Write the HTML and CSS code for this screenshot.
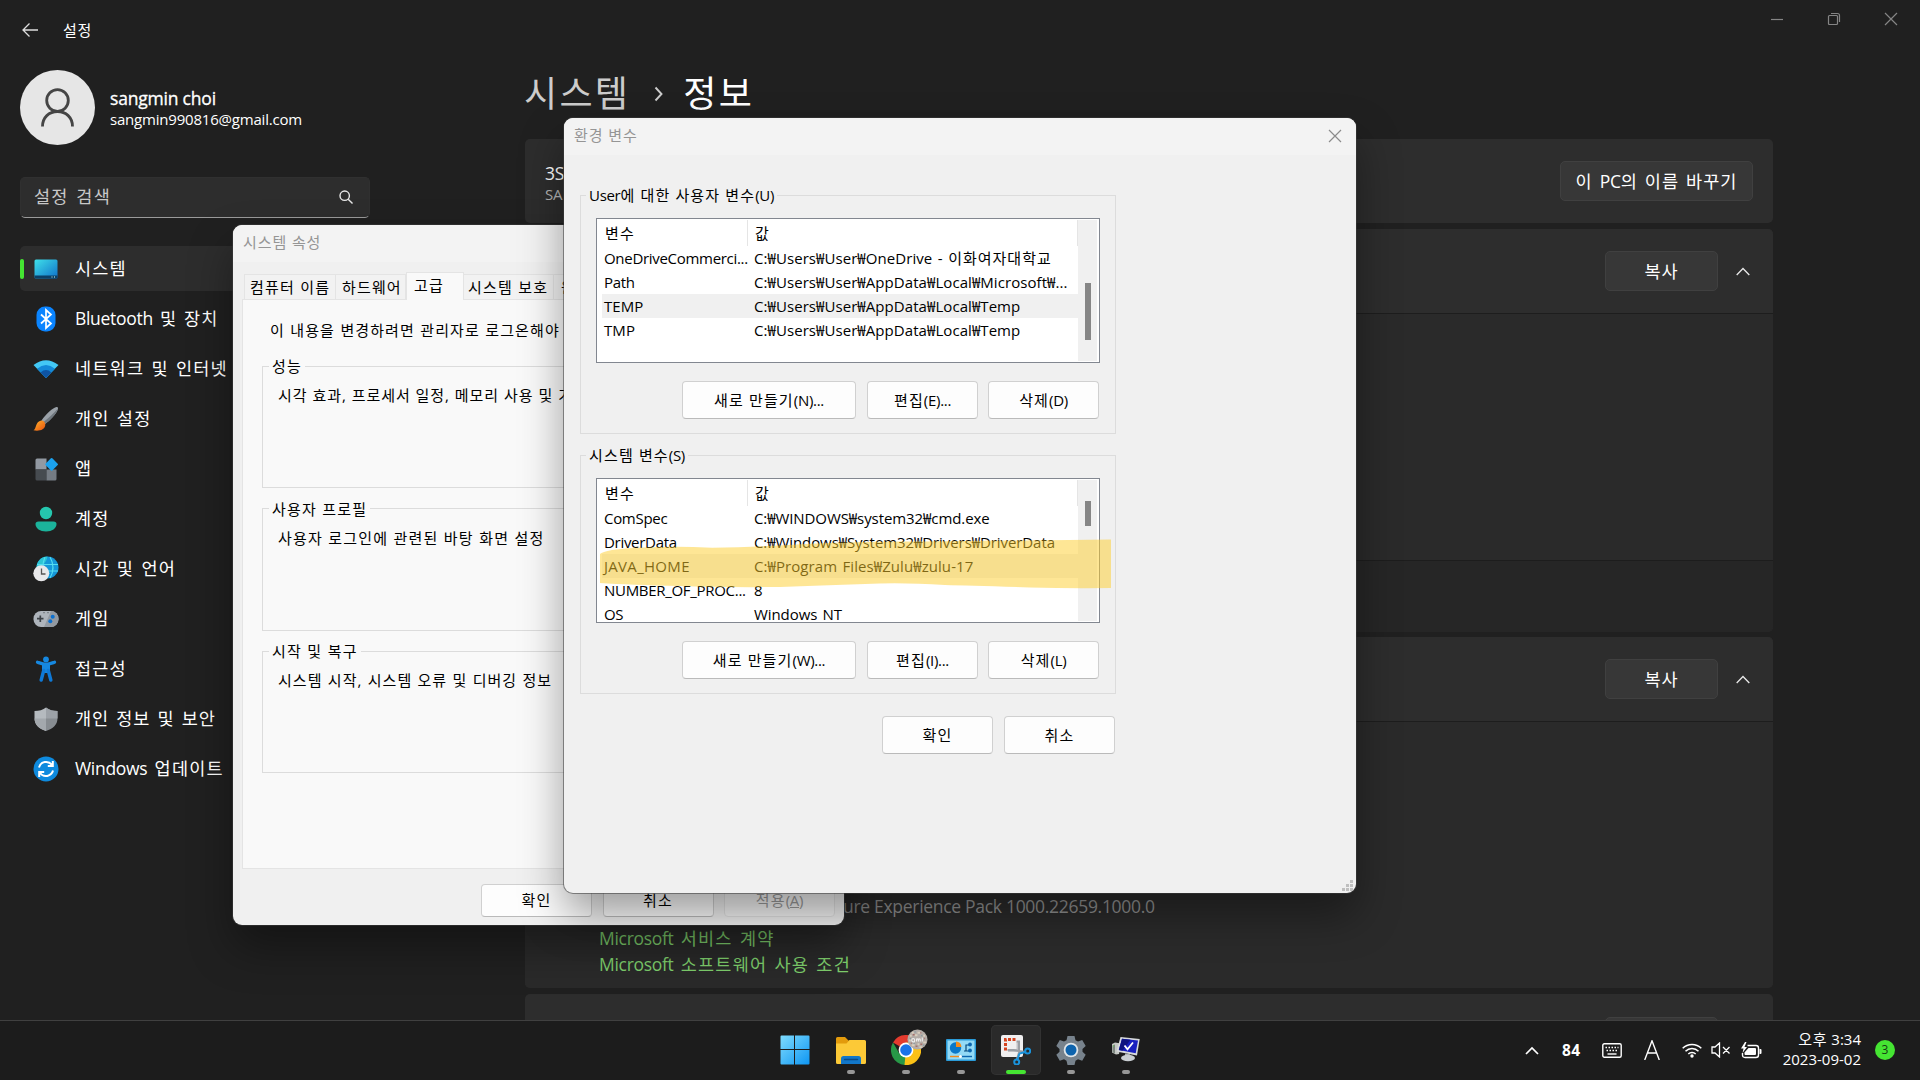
FILE: index.html
```html
<!DOCTYPE html>
<html lang="ko">
<head>
<meta charset="utf-8">
<title>설정</title>
<link rel="stylesheet" href="styles.css">
</head>
<body>
<div class="desktop">

<div class="settings">
  <header class="topbar">
    <div class="topbar-left">
      <svg class="back" width="16" height="16" viewBox="0 0 16 16"><path d="M7.5 1.5 1 8l6.500 6.500M1 8h15" fill="none" stroke="#ddd" stroke-width="1.3"/></svg>
      <span class="app-name">설정</span>
    </div>
    <div class="window-controls">
      <svg width="14" height="14" viewBox="0 0 14 14"><path d="M1 7.500h12" stroke="#858585" stroke-width="1.200"/></svg>
      <svg width="14" height="14" viewBox="0 0 14 14"><path d="M1.500 4.500q0-1 1-1h7q1 0 1 1v7q0 1-1 1h-7q-1 0-1-1zM4 1.500h6.500q2 0 2 2V10" fill="none" stroke="#858585" stroke-width="1.200"/></svg>
      <svg width="14" height="14" viewBox="0 0 14 14"><path d="M1 1l12 12M13 1 1 13" stroke="#858585" stroke-width="1.200"/></svg>
    </div>
  </header>

  <div class="settings-body">
    <aside class="sidebar">
      <div class="account">
        <svg width="75" height="75" viewBox="0 0 75 75"><circle cx="37.500" cy="37.500" r="37.500" fill="#e6e6e6"/><g fill="none" stroke="#454545" stroke-width="2.800"><circle cx="37.500" cy="30.500" r="10.800"/><path d="M22.500 56.500c0-9 6.500-15 15-15s15 6 15 15"/></g></svg>
        <div class="account-text">
          <div class="account-name">sangmin choi</div>
          <div class="account-mail">sangmin990816@gmail.com</div>
        </div>
      </div>
      <div class="search">
        <span>설정 검색</span>
        <svg width="14" height="14" viewBox="0 0 14 14"><g fill="none" stroke="#e8e8e8" stroke-width="1.400"><circle cx="5.700" cy="5.700" r="4.700"/><path d="M9.200 9.200 13.500 13.500"/></g></svg>
      </div>
      <nav class="nav">
        <a class="nav-item current">
          <svg viewBox="0 0 26 26"><defs><linearGradient id="gm" x1="0" y1="0" x2="1" y2="1"><stop offset="0" stop-color="#3fe0ea"/><stop offset="1" stop-color="#0f70c8"/></linearGradient></defs><rect x="1.500" y="3.500" width="23" height="19" rx="1.500" fill="url(#gm)"/><path d="M1.500 19.500h23v1.500q0 1.500-1.500 1.500H3q-1.500 0-1.500-1.500z" fill="#0b3f66"/><path d="M18.500 21h1m1.500 0h1" stroke="#cfe" stroke-width="1"/></svg>
          <span class="nav-label">시스템</span></a>
        <a class="nav-item">
          <svg viewBox="0 0 26 26"><rect x="3.500" y=".5" width="19" height="25" rx="8.500" fill="#0a84ff"/><path d="M8 8.500l10 9-5 4.500V4l5 4.500-10 9" fill="none" stroke="#fff" stroke-width="1.700"/></svg>
          <span class="nav-label tight"><span class="la">Bluetooth</span> 및 장치</span></a>
        <a class="nav-item">
          <svg viewBox="0 0 26 26"><path d="M.5 9Q13-.5 25.500 9L13 22z" fill="#43c8f5"/><path d="M4 12.700Q13 5.500 22 12.700L13 22z" fill="#1489d8"/><path d="M7.600 16.400Q13 11.500 18.400 16.400L13 22z" fill="#0e54a4"/></svg>
          <span class="nav-label">네트워크 및 인터넷</span></a>
        <a class="nav-item">
          <svg viewBox="0 0 26 26"><defs><linearGradient id="gb" x1="0" y1="0" x2="1" y2="1"><stop offset="0" stop-color="#ffb52e"/><stop offset="1" stop-color="#e8500c"/></linearGradient></defs><path d="M8.500 14.500C13 8 20 1.500 23.500 1q2-.3 1.500 2C23.500 8 17 14.500 12 18z" fill="#9aa1a8"/><path d="M10 16.500C15 12.500 21 7 25 2.500 23.500 8 17 14.500 12 18z" fill="#6f777e"/><path d="M8.300 14.500c2.500 0 4.200 1.800 4 4.500-.3 5-6.500 6.500-11.800 5.300 3.200-1.600 1.500-8.500 7.800-9.800z" fill="url(#gb)"/></svg>
          <span class="nav-label">개인 설정</span></a>
        <a class="nav-item">
          <svg viewBox="0 0 26 26"><path d="M2.500 4q0-1.500 1.500-1.500h9.500v11h-11z" fill="#9299a2"/><path d="M2.500 13.500h11v11H4q-1.500 0-1.500-1.500z" fill="#464b50"/><path d="M13.500 13.500h10V23q0 1.500-1.500 1.500h-8.500z" fill="#757c84"/><rect x="13.800" y="3.600" width="9.600" height="9.600" rx="1" transform="rotate(45 18.600 8.400)" fill="#1ba2ee"/></svg>
          <span class="nav-label">앱</span></a>
        <a class="nav-item">
          <svg viewBox="0 0 26 26"><circle cx="13" cy="7" r="6.200" fill="#25c7ae"/><path d="M5.500 15.500h15q3 0 3 2.500c0 4.500-4.500 7.500-10.500 7.500S2.500 22.500 2.500 18q0-2.500 3-2.500z" fill="#1bb39b"/></svg>
          <span class="nav-label">계정</span></a>
        <a class="nav-item">
          <svg viewBox="0 0 26 26"><circle cx="14.500" cy="11.500" r="11" fill="#1597d8"/><path d="M14.500.5a11 11 0 0 0-11 11c6-1 10-5 11-11z" fill="#2cc5d4"/><path d="M12 1c-3 7-3 14 1 21M17 1c4 7 4 14 0 21M4 8.500h21M4.500 15h20.500" fill="none" stroke="#55ddf0" stroke-width="1.100"/><circle cx="8.300" cy="17.300" r="8" fill="#e8e8ea"/><path d="M8.500 12.500v5.500h4" fill="none" stroke="#555" stroke-width="1.300"/></svg>
          <span class="nav-label">시간 및 언어</span></a>
        <a class="nav-item">
          <svg viewBox="0 0 26 26"><rect x=".5" y="5" width="25" height="16" rx="7.500" fill="#aeb4bb"/><path d="M18 5a7.500 8 0 0 1 0 16h-7z" fill="#9299a1"/><path d="M7.300 9.500v6.500M4 12.700h6.500" stroke="#3d4247" stroke-width="1.700"/><circle cx="19.700" cy="10.700" r="2" fill="#0b70d0"/><circle cx="17.300" cy="15.300" r="2" fill="#0b70d0"/><path d="M10.500 6.700h1m3 0h1" stroke="#3d4247"/></svg>
          <span class="nav-label">게임</span></a>
        <a class="nav-item">
          <svg viewBox="0 0 26 26"><circle cx="13" cy="3.500" r="2.900" fill="#1688e0"/><path d="M4.500 6.300c3 1 5.500 2 8.500 2s5.500-1 8.500-2" fill="none" stroke="#1688e0" stroke-width="3.300" stroke-linecap="round"/><path d="M9 8h8v7l-1 2H10l-1-2z" fill="#1688e0"/><path d="M10.700 14.500 8.200 24M15.300 14.500 17.800 24" stroke="#0f79d6" stroke-width="3.400" stroke-linecap="round"/></svg>
          <span class="nav-label">접근성</span></a>
        <a class="nav-item">
          <svg viewBox="0 0 26 26"><path d="M13 1.500c3 2.500 7 3.500 11.500 3.500v7c0 7-4.500 10.500-11.500 13z" fill="#878c91"/><path d="M13 1.500C10 4 6 5 1.500 5v7c0 7 4.500 10.500 11.500 13z" fill="#b5babf"/><path d="M1.500 12.500H13V25C6 22.500 1.800 19 1.500 12.500z" fill="#a3a8ad"/><path d="M13 1.500c3 2.500 7 3.500 11.500 3.500v7.500H13z" fill="#9da2a8"/></svg>
          <span class="nav-label tight">개인 정보 및 보안</span></a>
        <a class="nav-item">
          <svg viewBox="0 0 26 26"><circle cx="13" cy="13" r="12.500" fill="#0e8ade"/><g fill="none" stroke="#fff" stroke-width="2"><path d="M6 11.500a7.300 7.300 0 0 1 13-2.500"/><path d="M20 14.500a7.300 7.300 0 0 1-13 2.500"/><path d="M19.800 5v5h-5M6.200 21v-5h5"/></g></svg>
          <span class="nav-label"><span class="la">Windows</span> 업데이트</span></a>
      </nav>
    </aside>

    <main class="content">
      <h1 class="crumbs"><span class="crumb-parent">시스템</span><svg width="10" height="16" viewBox="0 0 10 16"><path d="M1.500 1.500 7.500 8l-6 6.500" fill="none" stroke="#ccc" stroke-width="1.900"/></svg><span>정보</span></h1>
      <section class="card">
        <div class="card-head">
          <div class="pc"><div class="pc-name">3S</div><div class="pc-model">SA</div></div>
          <button class="dark-btn rename">이 <span class="la">PC</span>의 이름 바꾸기</button>
        </div>
      </section>
      <section class="card specs">
        <div class="card-head">
          <button class="dark-btn copy">복사</button>
          <svg class="chev" width="14" height="9" viewBox="0 0 14 9"><path d="M.7 8 7 1.500 13.300 8" fill="none" stroke="#e8e8e8" stroke-width="1.300"/></svg>
        </div>
        <div class="card-rows"></div>
        <div class="card-links"></div>
      </section>
      <section class="card windows-specs">
        <div class="card-head">
          <button class="dark-btn copy">복사</button>
          <svg class="chev" width="14" height="9" viewBox="0 0 14 9"><path d="M.7 8 7 1.500 13.300 8" fill="none" stroke="#e8e8e8" stroke-width="1.300"/></svg>
        </div>
        <div class="card-rows win-rows">
          <div class="experience la">ure Experience Pack 1000.22659.1000.0</div>
          <a class="link"><span class="la">Microsoft</span> 서비스 계약</a>
          <a class="link"><span class="la">Microsoft</span> 소프트웨어 사용 조건</a>
        </div>
      </section>
      <section class="card support">
        <div class="card-head"><span class="dark-btn copy"></span></div>
      </section>
    </main>
  </div>
</div>

<div class="dialog sysprops">
  <div class="dlg-title">시스템 속성</div>
  <div class="tabs">
    <span class="tab t1">컴퓨터 이름</span><span class="tab t2">하드웨어</span><span class="tab t3 active">고급</span><span class="tab t4">시스템 보호</span><span class="tab t5">원</span>
  </div>
  <div class="pane">
    <p class="intro">이 내용을 변경하려면 관리자로 로그온해야</p>
    <fieldset class="group"><legend>성능</legend><p class="perf">시각 효과, 프로세서 일정, 메모리 사용 및 가</p></fieldset>
    <fieldset class="group"><legend>사용자 프로필</legend><p>사용자 로그인에 관련된 바탕 화면 설정</p></fieldset>
    <fieldset class="group"><legend>시작 및 복구</legend><p class="startup">시스템 시작, 시스템 오류 및 디버깅 정보</p></fieldset>
  </div>
  <div class="dlg-actions">
    <button class="btn">확인</button><button class="btn">취소</button><button class="btn disabled">적용<span class="la">(<u>A</u>)</span></button>
  </div>
</div>

<div class="dialog envvars">
  <div class="dlg-title"><span>환경 변수</span>
    <svg width="14" height="14" viewBox="0 0 14 14"><path d="M1 1l12 12M13 1 1 13" stroke="#8b8b8b" stroke-width="1.200"/></svg>
  </div>
  <div class="env-body">
    <fieldset class="group env-group user-vars">
      <legend><span class="la">User</span>에 대한 사용자 변수<span class="la">(U)</span></legend>
      <div class="list">
        <div class="table">
          <div class="row head"><span>변수</span><span>값</span></div>
          <div class="row"><span class="la">OneDriveCommerci...</span><span class="value">C:₩Users₩User₩OneDrive - <span class="ko">이화여자대학교</span></span></div>
          <div class="row"><span class="la">Path</span><span class="value">C:₩Users₩User₩AppData₩Local₩Microsoft₩...</span></div>
          <div class="row selected"><span class="value">TEMP</span><span class="value">C:₩Users₩User₩AppData₩Local₩Temp</span></div>
          <div class="row"><span class="value">TMP</span><span class="value">C:₩Users₩User₩AppData₩Local₩Temp</span></div>
        </div>
        <div class="scroll user-scroll"><i></i></div>
      </div>
      <div class="group-actions">
        <button class="btn wide">새로 만들기<span class="la">(N)...</span></button><button class="btn">편집<span class="la">(E)...</span></button><button class="btn">삭제<span class="la">(D)</span></button>
      </div>
    </fieldset>
    <fieldset class="group env-group">
      <legend>시스템 변수<span class="la">(S)</span></legend>
      <div class="list">
        <div class="table">
          <div class="row head"><span>변수</span><span>값</span></div>
          <div class="row"><span class="la">ComSpec</span><span class="value">C:₩WINDOWS₩system32₩cmd.exe</span></div>
          <div class="row"><span class="la">DriverData</span><span class="value">C:₩Windows₩System32₩Drivers₩DriverData</span></div>
          <div class="row selected"><span class="value java">JAVA_HOME</span><span class="value path">C:₩Program Files₩Zulu₩zulu-17</span></div>
          <div class="row"><span class="la">NUMBER_OF_PROC...</span><span class="value">8</span></div>
          <div class="row last"><span class="la">OS</span><span class="value">Windows NT</span></div>
        </div>
        <div class="scroll system-scroll"><i></i></div>
        <svg class="marker" width="512" height="50" viewBox="0 0 512 50"><path d="M0 15Q2 13 12 11 30 8 48 8.500 75 7 112 8.700 160 8 205 5 260 2 320 2.500 400 1 425 1.500 470 1 511 .5V49Q470 49.500 430 48.500 370 46.500 345 46 300 43 265 45 220 46.500 180 48 120 48.500 80 47 30 46 0 44z" fill="rgb(254,206,44)" fill-opacity=".5"/></svg>
      </div>
      <div class="group-actions">
        <button class="btn wide">새로 만들기<span class="la">(W)...</span></button><button class="btn">편집<span class="la">(I)...</span></button><button class="btn">삭제<span class="la">(L)</span></button>
      </div>
    </fieldset>
    <div class="env-actions"><button class="btn">확인</button><button class="btn">취소</button></div>
  </div>
  <svg class="grip" width="11" height="11" viewBox="0 0 11 11"><path d="M8 0h3v3H8zM4 4h3v3H4zM8 4h3v3H8zM0 8h3v3H0zM4 8h3v3H4zM8 8h3v3H8z" fill="#bfbfbf"/></svg>
</div>

<footer class="taskbar">
  <div class="apps">
    <div class="app start"><svg viewBox="0 0 30 30"><defs><linearGradient id="gw" x1="0" y1="0" x2="1" y2="1"><stop offset="0" stop-color="#7fdcff"/><stop offset="1" stop-color="#0e96f2"/></linearGradient></defs><path d="M.5 1.500q0-1 1-1H14V14H.5zM15 .5h13.500q1 0 1 1V14H15zM.5 15H14v14.500H1.500q-1 0-1-1zM15 15h14.500v13.500q0 1-1 1H15z" fill="url(#gw)"/></svg></div>
    <div class="app running"><svg viewBox="0 0 30 30"><path d="M0 3.500Q0 2 1.500 2H9l3.500 3.500H17V12H0z" fill="#e39b0c"/><path d="M0 8.500h10.500L13.500 5H28.500Q30 5 30 6.500V27.500Q30 29 28.500 29H1.500Q0 29 0 27.500z" fill="#fcc937"/><path d="M5 23.500Q5 21 7.500 21h15q2.500 0 2.500 2.500V29H5z" fill="#1277c9"/><path d="M8.500 24.500h13" stroke="#0b4a86" stroke-width="1.400" stroke-linecap="round"/></svg></div>
    <div class="app running"><svg viewBox="0 0 30 30"><path d="M15 15 2 7.500A15 15 0 0 1 28 7.500H15z" fill="#e33b2e"/><path d="M15 15 8.500 18.700 2 7.500A15 15 0 0 0 13.500 30L21.500 18.700z" fill="#279847"/><path d="M15 15 15 7.500H28A15 15 0 0 1 13.500 30z" fill="#fbc116"/><circle cx="15" cy="15" r="7.400" fill="#fff"/><circle cx="15" cy="15" r="5.800" fill="#1a73e8"/></svg>
      <svg class="profile" viewBox="0 0 22 22"><circle cx="11" cy="11" r="10.500" fill="#b3aca7"/><path d="M5 4h2m4 0h3m3 3h2M3 7h2m3-.5h3M2 12h2m13 2h3M5 17h3m5 2h3m-5-3h2" stroke="#d9cdbd" stroke-width="2"/><path d="M6 6h2m6-2h1m3 6h1M4 15h1m9 1h2M9 18h2" stroke="#a8706b" stroke-width="1.500"/><path d="M8 3h1m6 4h1M3 10h1m3 5h1m9 2h1" stroke="#7795a0" stroke-width="1.300"/><path d="M5 12q0-2 1.500-2T8 12t-1.500 1.500T5 12M10 13v-3m0 1q2-2 2 2m0-2q2-2 2 2M16 9v4" fill="none" stroke="#eee" stroke-width="1.200"/></svg></div>
    <div class="app running"><svg viewBox="0 0 30 30"><rect y="4" width="30" height="22" rx="1" fill="#2a9bd8"/><rect x="1.500" y="5.500" width="27" height="19" fill="#93daf6"/><circle cx="9.500" cy="13" r="5.700" fill="#0b78c8"/><path d="M10 12V6.500a6 6 0 0 1 5.500 5.500z" fill="#f58b1a"/><path d="M18 16h2v-6h3M20 16h3" fill="none" stroke="#064a7c" stroke-width="1.200"/><g fill="#0b66b0"><circle cx="24" cy="9.500" r="1.900"/><circle cx="24" cy="15.500" r="1.900"/></g><path d="M4 21.500h10" stroke="#f58b1a" stroke-width="1.400"/><path d="M15 21.500h11" stroke="#0b66b0" stroke-width="1.400"/><circle cx="14.500" cy="21.500" r="1.500" fill="#fff"/></svg></div>
    <div class="app running focus"><svg viewBox="0 0 30 30"><rect y="0" width="22" height="22" rx="2" fill="#f0eff0"/><path d="M4.500 15.500V4.500H16" fill="none" stroke="#d5421d" stroke-width="3" stroke-dasharray="3 1.500"/><path d="M7 15.500h10V7" fill="none" stroke="#c2c2c6" stroke-width="3"/><path d="M15.500 6.500h2.500v11L16 24M6.500 15h6l12 2" fill="none" stroke="#9b9ea4" stroke-width="2"/><g fill="none" stroke="#1a93dc" stroke-width="2"><circle cx="26.700" cy="16" r="2.500"/><circle cx="15.700" cy="27" r="2.500"/><path d="M18.500 18.500l6-1.500M18.500 18.500 16.500 24.500"/></g></svg></div>
    <div class="app running"><svg viewBox="0 0 30 30"><path d="M11.500 1h7l1 4.200 2.500 1.400 4.200-1.600 3.500 6-3.200 3v2.800l3.200 3-3.500 6-4.200-1.500-2.500 1.500-1 4.200h-7l-1-4.200L8 24.300l-4.200 1.500-3.500-6 3.200-3V14L.3 11l3.500-6L8 6.600l2.500-1.400z" fill="#77828c"/><circle cx="15" cy="15" r="7.300" fill="#dfe5e9"/><circle cx="15" cy="15" r="5.500" fill="#0d63ad"/></svg></div>
    <div class="app running"><svg viewBox="0 0 30 30"><path d="M1 9l3-1.500 6 1L8 19l-3 .5-4-2z" fill="#c5c8c4"/><path d="M1.500 10.500l2.500-1v9l-2.500-1.300z" fill="#7d867f"/><path d="M2 11h1" stroke="#5fd34a" stroke-width="1.200"/><path d="M9.500 2 28.700 4 26 20.500 5.500 16.500z" fill="#d7dadd"/><path d="M11 3.800 27 5.500 24.700 18.300 7.800 15z" fill="#1820c0"/><path d="M11 3.800 19.500 4.700 11.500 15.700 7.800 15z" fill="#0e1380"/><path d="M13.500 10.500l3 3.800L22 7.500" fill="none" stroke="#fff" stroke-width="1.800"/><path d="M14 18.500l5 .8v3h-5z" fill="#aab0b4"/><ellipse cx="17" cy="23" rx="7" ry="3.300" fill="#c9ced2"/></svg></div>
  </div>
  <div class="tray">
    <svg class="t-up" width="14" height="9" viewBox="0 0 14 9"><path d="M1 8 7 2l6 6" fill="none" stroke="#fff" stroke-width="1.700"/></svg>
    <span class="temp">84</span>
    <svg class="t-kb" width="20" height="15" viewBox="0 0 20 15"><rect x=".8" y=".8" width="18.400" height="13.400" rx="1.500" fill="none" stroke="#fff" stroke-width="1.400"/><path d="M3.500 4.500h13M4.500 7.500h11" stroke="#fff" stroke-width="1.500" stroke-dasharray="1.500 1.500"/><path d="M5.500 11h9" stroke="#fff" stroke-width="1.400"/></svg>
    <svg class="t-ime" width="16" height="20" viewBox="0 0 16 20"><path d="M.7 20 8 .8 15.300 20M3.500 13h9" fill="none" stroke="#fff" stroke-width="1.400"/></svg>
    <svg class="t-wifi" width="20" height="16" viewBox="0 0 20 16"><g fill="none" stroke="#fff" stroke-width="1.500"><path d="M.7 6.300a13 13 0 0 1 18.600 0M3.500 9.200a9 9 0 0 1 13 0M6.300 12a5.200 5.200 0 0 1 7.400 0"/></g><circle cx="10" cy="14" r="1.700" fill="#fff"/></svg>
    <svg class="t-vol" width="20" height="16" viewBox="0 0 20 16"><path d="M1 5h3l4.500-4v14L4 11H1zM12 5l6.500 6.500M18.500 5 12 11.500" fill="none" stroke="#fff" stroke-width="1.300"/></svg>
    <svg class="t-bat" width="21" height="17" viewBox="0 0 21 17"><path d="M6.500 3.500H15q2.500 0 2.500 2.500v7q0 2.500-2.500 2.500H4Q1.500 15.500 1.500 13v-2" fill="none" stroke="#fff" stroke-width="1.400"/><path d="M18.500 7h1q1 0 1 1v3q0 1-1 1h-1zM3.500 10.500 7.500 6H14q1 0 1 1v5q0 1-1 1H4.500q-1 0-1-1zM4 0 0 6.500h2.500L1.500 11 6 5H3.500L5.500 0z" fill="#fff"/></svg>
    <div class="clock"><div>오후 <span class="la">3:34</span></div><div class="la date">2023-09-02</div></div>
    <span class="badge">3</span>
  </div>
</footer>
</div>
</body>
</html>
```
FILE: styles.css
```css
* { box-sizing: border-box; }
body {
  margin: 0;
  overflow: hidden;
  background: #202020;
  font-family: "Open Sans", "Noto Sans CJK KR", sans-serif;
  font-size: 15px;
}
button { font: inherit; letter-spacing: inherit; }
p, h1 { margin: 0; }
svg { display: block; flex: none; }

.desktop { position: relative; width: 1920px; height: 1080px; overflow: hidden; letter-spacing: 1.15px; }
.la { letter-spacing: -0.3px; }
.ko { letter-spacing: 1.1px; }

/* Settings window */
.settings { height: 1020px; overflow: hidden; color: #fff; }
.topbar { display: flex; justify-content: space-between; height: 70px; padding: 0 22px 0 22px; }
.topbar-left { display: flex; align-items: center; gap: 25px; height: 60px; letter-spacing: .8px; }
.app-name { padding-bottom: 2px; }
.window-controls { display: flex; gap: 43px; padding-top: 12px; }
.settings-body { display: flex; gap: 155px; }

.sidebar { width: 350px; margin-left: 20px; }
.account { display: flex; align-items: center; gap: 15px; height: 75px; }
.account-name { font-size: 17.5px; line-height: 22px; font-weight: 500; letter-spacing: -0.2px; -webkit-text-stroke: .3px #fff; }
.account-mail { font-size: 15px; line-height: 20px; letter-spacing: -0.2px; }
.search {
  display: flex; align-items: center; justify-content: space-between;
  height: 41px; margin-top: 32px; padding: 0 16px 4px 13px;
  border: 1px solid #303030; border-bottom: 1px solid #9a9a9a; border-radius: 5px;
  background: #2d2d2d; color: #c8c8c8; font-size: 17.5px; letter-spacing: 1.2px; word-spacing: 2px;
}
.search svg { margin-top: 2px; }
.nav { display: flex; flex-direction: column; gap: 5px; margin-top: 28px; }
.nav-item { position: relative; display: flex; align-items: center; gap: 16px; height: 45px; padding-left: 13px; border-radius: 5px; }
.nav-item svg { width: 26px; height: 26px; }
.nav-item.current { background: #2d2d2d; }
.nav-item.current::before { content: ""; position: absolute; left: 0; top: 13px; width: 4px; height: 20px; border-radius: 2px; background: #45e532; }
.nav-label { padding-bottom: 1px; font-size: 17.5px; line-height: 24px; letter-spacing: 1.2px; word-spacing: 1.5px; white-space: nowrap; }
.nav-label.tight { letter-spacing: 1px; word-spacing: 1.5px; }

.content { width: 1248px; }
.crumbs { display: flex; align-items: center; height: 48px; margin-bottom: 21px; font-size: 36px; font-weight: 400; letter-spacing: 2.3px; line-height: 48px; }
.crumb-parent { margin-left: -1px; color: #ccc; }
.crumbs svg { margin: 0 19px 0 24px; }
.card { border-radius: 5px; overflow: hidden; background: #2b2b2b; }
.card + .card { margin-top: 6px; }
.card-head { display: flex; align-items: center; justify-content: flex-end; height: 84px; padding: 0 20px; background: #2d2d2d; }
.card-head + .card-rows { border-top: 1px solid #1d1d1d; }
.specs { height: 403px; }
.card-rows { height: 247px; background: #2a2a2a; }
.card-links { height: 72px; border-top: 1px solid #1d1d1d; background: #262626; }
.card + .windows-specs { height: 351px; margin-top: 5px; }
.win-rows { display: flex; flex-direction: column; height: 267px; padding-top: 171px; font-size: 17.5px; line-height: 26px; }
.support .card-head { align-items: flex-start; padding: 23px 55px 0 0; }
.pc { margin-right: auto; padding-top: 3px; }
.pc-name { font-size: 17.5px; line-height: 22px; letter-spacing: -.3px; }
.pc-model { color: #b5b5b5; line-height: 20px; letter-spacing: -.3px; }
.dark-btn {
  height: 40px; padding: 0 0 2px; border: 1px solid #404040; border-radius: 5px;
  background: #373737; color: #fff; font-size: 17.5px; letter-spacing: 1px; word-spacing: 1.5px;
}
.rename { width: 193px; }
.copy { width: 113px; }
.chev { margin: 0 3px 0 18px; }
.experience { margin-left: 318px; margin-bottom: 6px; color: #909090; }
.link { margin-left: 74px; color: #7fd06d; letter-spacing: 1.2px; word-spacing: 1.5px; }

/* Dialog windows */
.dialog {
  position: absolute; overflow: hidden; border-radius: 9px; background: #f0f0f0; color: #000;
  box-shadow: 0 0 0 1px rgba(60, 60, 60, .55), 0 22px 44px rgba(0, 0, 0, .38);
}
.dlg-title {
  display: flex; align-items: center; justify-content: space-between; height: 37px;
  padding: 0 14px 4px 10px; background: #f3f3f3; color: #959595; letter-spacing: .9px;
}
.dlg-title svg { margin-top: 2px; }
.group { margin: 0; border: 1px solid #dcdcdc; }
.group legend { height: 20px; padding: 0 3px; line-height: 20px; white-space: nowrap; }
.btn {
  width: 111px; height: 38px; padding: 0 0 2px; border: 1px solid #d0d0d0; border-bottom-color: #bababa;
  border-radius: 4px; background: #fdfdfd; color: #000;
}

.sysprops { left: 233px; top: 225px; width: 611px; height: 700px; }
.tabs { display: flex; align-items: flex-end; height: 37px; padding-left: 11px; }
.tab { flex: none; height: 25px; border: 1px solid #e4e4e4; border-bottom: 0; border-left-width: 0; background: #f2f2f2; line-height: 24px; padding-left: 6px; white-space: nowrap; }
.t1 { width: 92px; padding-left: 5px; border-left-width: 1px; letter-spacing: 1.25px; }
.t2 { width: 70px; }
.t3 { width: 58px; }
.t4 { width: 90px; padding-left: 4px; letter-spacing: 1.25px; }
.t5 { width: 80px; padding-left: 7px; }
.tab.active { position: relative; height: 28px; margin-bottom: -1px; padding-left: 7px; border-left-width: 1px; background: #f9f9f9; }
.pane { width: 594px; height: 570px; margin-left: 9px; padding: 20px 19px 0; border: 1px solid #e4e4e4; background: #f9f9f9; line-height: 20px; white-space: nowrap; word-spacing: .4px; }
.intro { padding: 0 0 16px 8px; letter-spacing: 1.1px; }
.pane .group { height: 132px; padding: 9px 15px 0; }
.pane .group + .group { margin-top: 10.5px; }
.pane legend { margin-left: -9px; }
.perf { letter-spacing: .92px; word-spacing: .2px; }
.startup { letter-spacing: 1.03px; }
.dlg-actions { display: flex; justify-content: flex-end; gap: 10.5px; padding: 15px 9px 0 0; }
.dlg-actions .btn { height: 33px; }
.btn.disabled { color: #9a9a9a; background: #f5f5f5; border-color: #e2e2e2; }

.envvars { left: 564px; top: 118px; width: 792px; height: 775px; }
.env-body { width: 552px; padding: 30px 0 0 16px; }
.env-group { width: 536px; height: 249px; padding: 13px 0 0 15px; }
.env-group + .env-group { margin-top: 11px; }
.env-group legend { margin-left: -10px; }
.list { position: relative; display: flex; justify-content: space-between; width: 504px; height: 145px; padding: 1px; border: 1px solid #828790; background: #fff; }
.table { width: 480px; height: 142px; }
.row { display: grid; grid-template-columns: 150px 1fr; margin-left: 4px; padding-left: 2px; height: 24px; line-height: 25px; white-space: nowrap; }
.row.last { height: 20px; line-height: 24px; }
.row.selected { background: #f0f0f0; }
.row.head { height: 26px; margin-left: 0; padding-left: 0; line-height: 26px; grid-template-columns: 150px 330px; }
.row.head span { height: 26px; padding-left: 7px; border-right: 1px solid #e5e5e5; }
.value { letter-spacing: -.08px; word-spacing: 1.5px; }
.user-vars .value { letter-spacing: .07px; }
.value .ko, .user-vars .value .ko { word-spacing: 0; letter-spacing: 1px; }
.value.path { letter-spacing: .07px; }
.value.java { letter-spacing: .3px; }
.scroll { width: 20px; padding-left: 7px; background: #f0f0f0; margin-right: 1px; }
.scroll i { display: block; width: 6px; background: #868686; }
.user-scroll i { height: 57px; margin-top: 63px; }
.system-scroll i { height: 25px; margin-top: 21px; }
.marker { position: absolute; left: 3px; top: 60px; }
.group-actions { display: flex; justify-content: flex-end; gap: 10px; width: 503px; margin-top: 18px; }
.btn.wide { width: 174px; margin-right: 1px; }
.env-actions { display: flex; justify-content: flex-end; gap: 11px; margin-top: 22px; width: 535px; }
.grip { position: absolute; right: 3px; bottom: 2px; }

/* Taskbar */
.taskbar { position: relative; display: flex; height: 60px; border-top: 1px solid #404040; background: #1c1c1c; color: #fff; }
.apps { display: flex; gap: 5px; padding: 4px 0 0 771px; width: 1525px; flex: none; }
.app { position: relative; display: flex; justify-content: center; width: 50px; height: 50px; padding-top: 10px; border-radius: 5px; }
.app svg { width: 30px; height: 30px; }
.app.start svg { margin-right: 3px; }
.app .profile { position: absolute; left: 26px; top: 4px; width: 21px; height: 21px; }
.app.running::after { content: ""; position: absolute; left: 21px; bottom: 1px; width: 8px; height: 4px; border-radius: 2px; background: #969696; }
.app.focus { background: #2a2a2a; box-shadow: inset 0 0 0 1px #323232; }
.app.focus::after { left: 15px; width: 20px; background: #45e532; }
.tray { display: flex; align-items: center; height: 58px; }
.temp { margin-left: 23px; width: 21px; font-weight: 700; font-size: 15.5px; letter-spacing: .3px; }
.t-kb { margin-left: 19px; }
.t-ime { margin-left: 22px; }
.t-wifi { margin-left: 22px; }
.t-vol { margin-left: 9px; }
.t-bat { margin-left: 10px; }
.clock { width: 99px; padding-bottom: 2px; text-align: right; line-height: 20px; letter-spacing: .5px; }
.clock .la { letter-spacing: 0; }
.badge { width: 20px; height: 20px; margin-left: 14px; border-radius: 50%; background: #45e532; color: #163b12; font-size: 12px; line-height: 20px; text-align: center; letter-spacing: 0; }
```
